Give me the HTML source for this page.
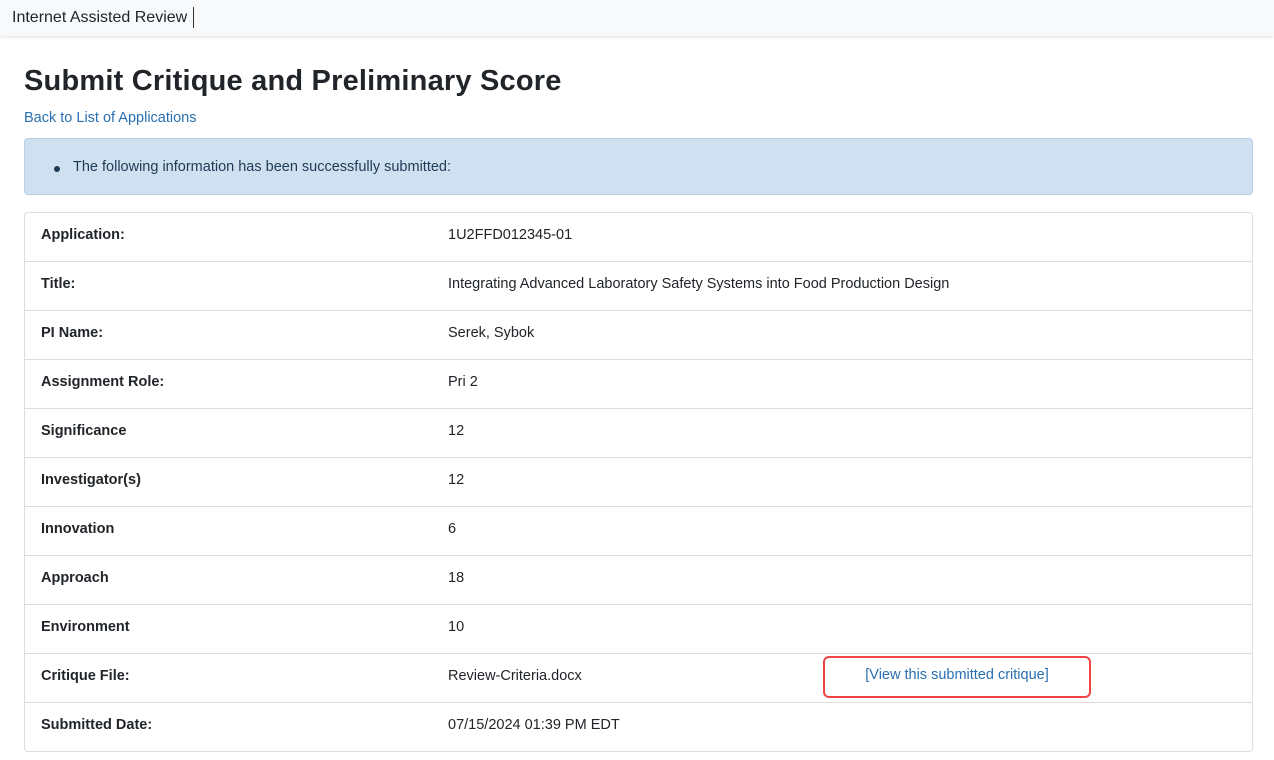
<!DOCTYPE html>
<html><head><style>
body{margin:0;font-family:"Liberation Sans",sans-serif;color:#212529;background:#fff;width:1274px;height:760px;overflow:hidden;position:relative}
.hdr{height:36px;background:#f8f9fa;box-shadow:0 1px 4px rgba(0,0,0,.12);position:relative}
.hdr span{position:absolute;left:12px;top:7px;font-size:16px;padding-right:6px;border-right:1px solid #333;line-height:21px}
h1{position:absolute;left:24px;top:61px;margin:0;font-size:29px;font-weight:bold;color:#212529;line-height:40px;letter-spacing:0.2px}
.back{position:absolute;left:24px;top:110px;font-size:14.5px;color:#2a6fb0;text-decoration:none}
.alert{position:absolute;left:24px;top:138px;width:1229px;height:57px;background:#cfe0f0;border:1px solid #b6d0e8;border-radius:4px;box-sizing:border-box}
.alert div{position:absolute;left:48px;top:20px;font-size:14.5px;color:#1f3a55}
.alert div:before{content:"";position:absolute;left:-19px;top:7px;width:6px;height:6px;border-radius:50%;background:#1f3a55}
table{position:absolute;left:24px;top:212px;width:1229px;border-collapse:separate;border-spacing:0;border:1px solid #ddd;border-radius:4px;font-size:14.5px}
td{height:48px;border-top:1px solid #ddd;padding:0 0 5px 16px;box-sizing:border-box;vertical-align:middle}
tr:first-child td{border-top:none;height:48px}
td{height:49px}
tr:first-child td{height:48px}
td.l{font-weight:bold;width:407px}
.red{position:absolute;left:823px;top:656px;width:268px;height:42px;border:2px solid #f04444;border-radius:6px;box-sizing:border-box;text-align:center;line-height:34px;font-size:14.5px;color:#2a6fb0}
</style></head><body>
<div class="hdr"><span>Internet Assisted Review</span></div>
<h1>Submit Critique and Preliminary Score</h1>
<a class="back">Back to List of Applications</a>
<div class="alert"><div>The following information has been successfully submitted:</div></div>
<table>
<tr><td class="l">Application:</td><td>1U2FFD012345-01</td></tr>
<tr><td class="l">Title:</td><td>Integrating Advanced Laboratory Safety Systems into Food Production Design</td></tr>
<tr><td class="l">PI Name:</td><td>Serek, Sybok</td></tr>
<tr><td class="l">Assignment Role:</td><td>Pri 2</td></tr>
<tr><td class="l">Significance</td><td>12</td></tr>
<tr><td class="l">Investigator(s)</td><td>12</td></tr>
<tr><td class="l">Innovation</td><td>6</td></tr>
<tr><td class="l">Approach</td><td>18</td></tr>
<tr><td class="l">Environment</td><td>10</td></tr>
<tr><td class="l">Critique File:</td><td>Review-Criteria.docx</td></tr>
<tr><td class="l">Submitted Date:</td><td>07/15/2024 01:39 PM EDT</td></tr>
</table>
<div class="red">[View this submitted critique]</div>
</body></html>
